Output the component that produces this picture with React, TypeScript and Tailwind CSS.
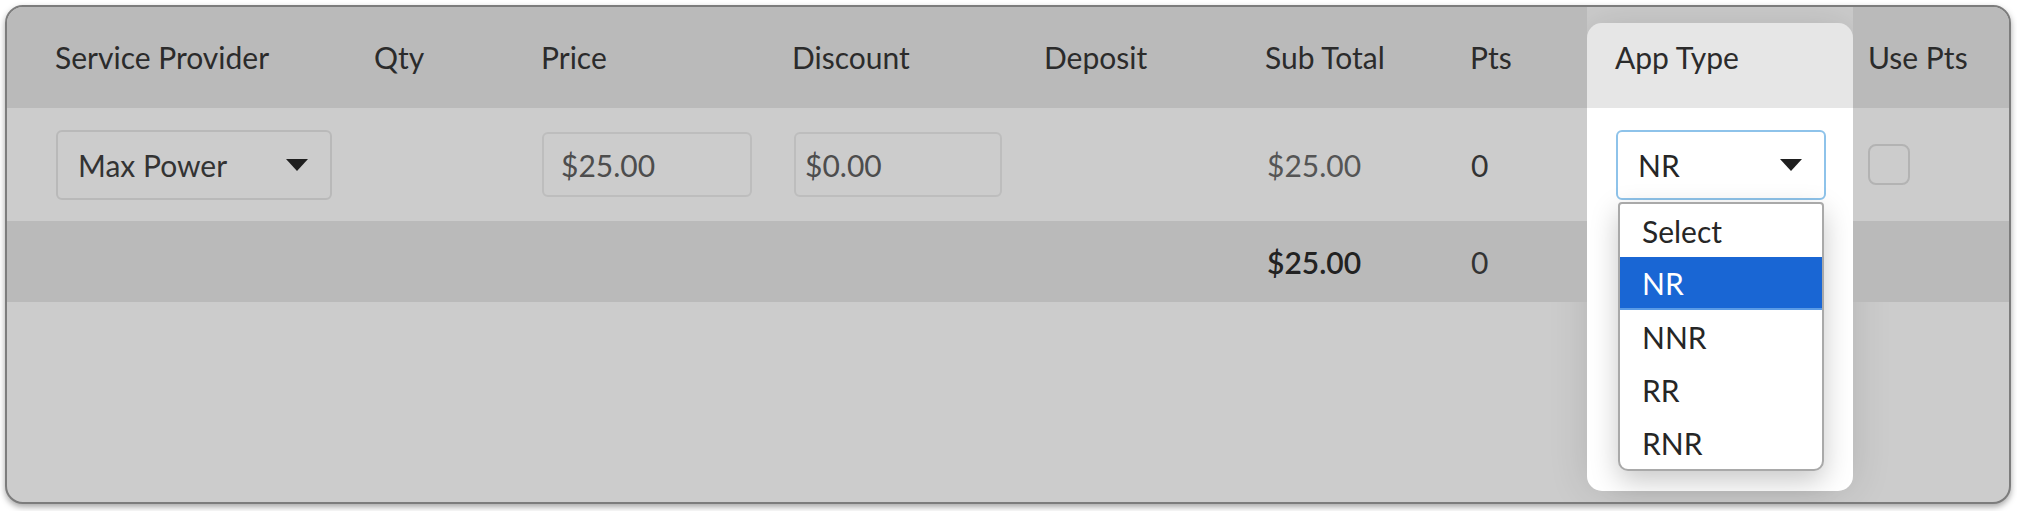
import { useState } from 'react'

const appTypes = ['Select', 'NR', 'NNR', 'RR', 'RNR']

function Caret() {
  return (
    <svg width="22" height="12" viewBox="0 0 22 12" className="shrink-0">
      <path d="M0 0h22L11 12z" fill="#1f1f1f" />
    </svg>
  )
}

function App() {
  const [appType] = useState('NR')

  return (
    <div className="w-[2017px] h-[511px] bg-white p-[5px] font-['Lato','Liberation_Sans',sans-serif] text-[30px] leading-none text-[#2b2b2b]">
      <div className="relative w-[2006px] h-[499px] rounded-[18px] border-2 border-[#7c7c7c] bg-[#cccccc] overflow-hidden shadow-[0_3px_6px_rgba(0,0,0,0.35)]">
        {/* spotlight on the App Type column */}
        <div className="absolute left-[1580px] top-[16px] w-[266px] h-[468px] rounded-[15px] overflow-hidden flex flex-col shadow-[0_0_40px_rgba(0,0,0,0.12)] z-10">
          <div className="h-[85px] bg-[#e6e6e6]"></div>
          <div className="flex-1 bg-white"></div>
        </div>

        <div className="relative z-20 grid grid-cols-[367px_167px_251px_252px_221px_205px_117px_266px_1fr]">
          {/* header */}
          <div className="contents">
            <div className="h-[101px] bg-[#bababa] flex items-center pl-[48px] pb-[2px]">Service Provider</div>
            <div className="h-[101px] bg-[#bababa] flex items-center pb-[2px]">Qty</div>
            <div className="h-[101px] bg-[#bababa] flex items-center pb-[2px]">Price</div>
            <div className="h-[101px] bg-[#bababa] flex items-center pb-[2px]">Discount</div>
            <div className="h-[101px] bg-[#bababa] flex items-center pb-[2px]">Deposit</div>
            <div className="h-[101px] bg-[#bababa] flex items-center pb-[2px]">Sub Total</div>
            <div className="h-[101px] bg-[#bababa] flex items-center pb-[2px]">Pts</div>
            <div className="h-[101px] flex items-center pl-[28px] pb-[2px]">App Type</div>
            <div className="h-[101px] bg-[#bababa] flex items-center pl-[15px] pb-[2px]">Use Pts</div>
          </div>

          {/* line item */}
          <div className="contents">
            <div className="h-[113px] bg-[#cccccc] flex items-center pl-[49px]">
              <div className="w-[276px] h-[70px] rounded-[6px] border-2 border-[#b9b9b9] flex items-center justify-between pl-[20px] pr-[22px] text-[#333]">
                <span>Max Power</span>
                <Caret />
              </div>
            </div>
            <div className="h-[113px] bg-[#cccccc]"></div>
            <div className="h-[113px] bg-[#cccccc] flex items-center pl-[1px]">
              <div className="w-[210px] h-[65px] rounded-[6px] border-2 border-[#bdbdbd] flex items-center pl-[17px] text-[#4d4d4d]">$25.00</div>
            </div>
            <div className="h-[113px] bg-[#cccccc] flex items-center pl-[2px]">
              <div className="w-[208px] h-[65px] rounded-[6px] border-2 border-[#bdbdbd] flex items-center pl-[9px] text-[#4d4d4d]">$0.00</div>
            </div>
            <div className="h-[113px] bg-[#cccccc]"></div>
            <div className="h-[113px] bg-[#cccccc] flex items-center pl-[2px] text-[#555]">$25.00</div>
            <div className="h-[113px] bg-[#cccccc] flex items-center pl-[1px] text-[#333]">0</div>
            <div className="relative h-[113px] flex items-center pl-[29px]">
              <div className="w-[210px] h-[70px] rounded-[6px] border-2 border-[#8ec3ea] bg-white flex items-center justify-between pl-[20px] pr-[22px] text-[#262626]">
                <span>{appType}</span>
                <Caret />
              </div>
              <ul className="absolute left-[31px] top-[94px] w-[206px] rounded-t-[4px] rounded-b-[10px] border-2 border-[#a9a9a9] bg-white overflow-hidden shadow-[0_10px_28px_rgba(0,0,0,0.22)] z-30">
                {appTypes.map((t) => (
                  <li
                    key={t}
                    className={
                      t === appType
                        ? 'h-[53px] flex items-center pl-[22px] bg-[#1966d4] text-white border-b-2 border-[#5a9be6]'
                        : 'h-[53px] flex items-center pl-[22px] text-[#262626]'
                    }
                  >
                    {t}
                  </li>
                ))}
              </ul>
            </div>
            <div className="h-[113px] bg-[#cccccc] flex items-center pl-[15px]">
              <div className="w-[42px] h-[41px] rounded-[8px] border-2 border-[#b3b3b3]"></div>
            </div>
          </div>

          {/* totals */}
          <div className="contents">
            <div className="h-[81px] bg-[#bababa]"></div>
            <div className="h-[81px] bg-[#bababa]"></div>
            <div className="h-[81px] bg-[#bababa]"></div>
            <div className="h-[81px] bg-[#bababa]"></div>
            <div className="h-[81px] bg-[#bababa]"></div>
            <div className="h-[81px] bg-[#bababa] flex items-center pl-[2px] font-semibold text-[#222]">$25.00</div>
            <div className="h-[81px] bg-[#bababa] flex items-center pl-[1px] text-[#333]">0</div>
            <div className="h-[81px]"></div>
            <div className="h-[81px] bg-[#bababa]"></div>
          </div>
        </div>
      </div>
    </div>
  )
}

export default App
